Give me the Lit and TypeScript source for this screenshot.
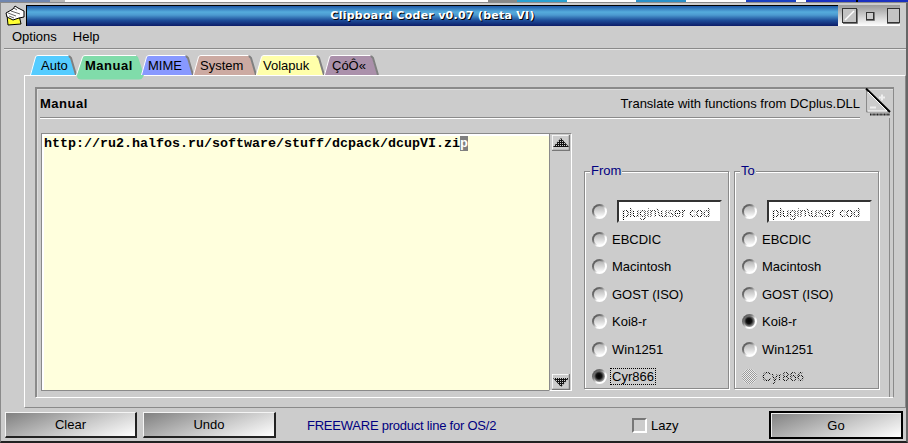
import { LitElement, html, css } from "lit";
import { customElement } from "lit/decorators.js";

const TABS = [
  { label: "Auto", w: 49, pad: 11, color: "#55ccff" },
  { label: "Manual", w: 68, pad: 9, color: "#80dcaa", active: true },
  { label: "MIME", w: 55, pad: 7, color: "#8899ff" },
  { label: "System", w: 66, pad: 7, color: "#ccaaa2" },
  { label: "Volapuk", w: 71, pad: 7, color: "#ffffaa" },
  { label: "ÇóÔ«", w: 57, pad: 8, color: "#aa90aa" },
];

const STRIP = [
  ["#6f86b0", 50], ["#b8b8b8", 15], ["#ffffff", 423], ["#888888", 29], ["#2aa0d0", 50], ["#ffffff", 69],
  ["#2a8fc8", 50], ["#ffffff", 60], ["#1a40c0", 50], ["#ffffff", 10], ["#1a30c0", 50], ["#000000", 2], ["#1a30c0", 50],
];

const ENCODINGS = ["EBCDIC", "Macintosh", "GOST (ISO)", "Koi8-r", "Win1251", "Cyr866"];

@customElement("app-root")
export class AppRoot extends LitElement {
  static styles = css`
    :host { display: block; width: 908px; height: 443px; overflow: hidden; background: #ccc;
      font-family: "Liberation Sans", Arial, sans-serif; font-size: 13px; color: #000; }
    * { box-sizing: border-box; }
    .strip { display: flex; height: 2px; overflow: hidden; }
    .strip span { flex: none; height: 2px; }
    .window { height: 441px; display: flex; flex-direction: column; background: #ccc;
      border-top: 1px solid #8a8a8a; border-left: 1px solid #8a8a8a; border-right: 2px solid #666; border-bottom: 2px solid #222; }
    .titlebar { display: flex; height: 21px; margin-top: 2px; padding-left: 4px; padding-right: 6px; }
    .app-icon { width: 21px; height: 21px; flex: none; }
    .caption { flex: 1; display: flex; align-items: center; justify-content: center; padding-bottom: 2px;
      border-top: 1px solid #000; border-left: 1px solid #000;
      background: linear-gradient(#1f5aa8 0%, #55acdc 30%, #4c9ad0 45%, #1d4c98 72%, #0c1c68 100%);
      color: #fff; text-shadow: 1px 1px 0 #000; font-family: "DejaVu Sans", sans-serif; font-weight: bold; font-size: 11px; letter-spacing: 0.26px; }
    .winbtns { width: 62px; flex: none; display: block; }
    .menu { display: flex; align-items: center; height: 23px; margin: 0 0 0 3px; padding-left: 8px; gap: 16px; padding-bottom: 2px;
      border-bottom: 1px solid #8a8a8a; box-shadow: 0 1px 0 #e8e8e8; }
    .tabs { display: flex; height: 20px; margin-top: 6px; padding-left: 29px; position: relative; z-index: 1; }
    .tab { display: grid; height: 20px; flex: none; margin-right: -3px; }
    .tab > * { grid-area: 1 / 1; }
    .tab svg { display: block; }
    .tab span { display: flex; align-items: center; padding-top: 1px; }
    .tab.active { font-weight: bold; height: 25px; letter-spacing: 0.5px; }
    .tab.active span { height: 20px; }
    .page { height: 333px; margin-left: 23px; padding: 11px 0 0 10px;
      border-top: 1px solid #fff; border-left: 1px solid #fff; border-right: 1px solid #8a8a8a; border-bottom: 1px solid #8a8a8a; }
    .frame { width: 859px; height: 311px; border-top: 1px solid #8a8a8a; border-left: 1px solid #8a8a8a;
      border-bottom: 1px solid #fff; box-shadow: inset 1px 1px 0 #8a8a8a, inset 2px 2px 0 #ddd; border-right: 1px solid #8a8a8a; }
    .header { display: flex; height: 30px; padding-left: 4px; }
    .header-text { flex: 1; display: flex; align-items: center; justify-content: space-between; padding-top: 2px;
      border-bottom: 1px solid #8a8a8a; box-shadow: 0 1px 0 #fff; }
    .header-text b { font-size: 13px; letter-spacing: 0.5px; }
    .fold { width: 28px; height: 30px; flex: none; margin-left: 5px; }
    .content { display: flex; width: 854px; height: 279px; padding: 15px 0 0 5px; border-right: 1px solid #8a8a8a; }
    .editor { width: 508px; height: 258px; flex: none; padding: 2px 0 0 2px; background: #ffffdd;
      border: 1px solid #8a8a8a; border-right: none; box-shadow: inset 1px 1px 0 #fff, inset 2px 2px 0 #fff;
      font-family: "Liberation Mono", monospace; font-size: 13.33px; font-weight: bold; line-height: 16px; white-space: pre; }
    .editor em { font-style: normal; background: #808080; color: #fff; }
    .scroll { width: 23px; height: 258px; flex: none; display: flex; flex-direction: column; justify-content: space-between;
      padding: 1px 0 0 2px; background: #ccc; border-left: 1px solid #8a8a8a; border-right: 1px solid #fff; border-bottom: 1px solid #fff; border-top: 1px solid #8a8a8a; }
    .sbtn { width: 18px; height: 16px; display: block; }
    .groups { display: flex; gap: 5px; margin-left: 12px; margin-top: 38px; }
    .group { width: 145px; height: 218px; display: flex; flex-direction: column; padding-left: 7px;
      border: 1px solid #8a8a8a; box-shadow: 1px 1px 0 #fff, inset 1px 1px 0 #fff; }
    .legend { align-self: flex-start; height: 16px; line-height: 16px; margin: -9px 0 19px -2px; padding: 0 1px; background: #ccc; color: #000080; }
    .row { display: flex; align-items: center; height: 27.5px; flex: none; gap: 5px; white-space: nowrap; }
    .row.first { gap: 10px; }
    .radio { width: 15px; height: 15px; flex: none; border-radius: 50%; display: grid; place-items: center;
      background: linear-gradient(135deg, #444 0%, #777 35%, #fff 62%, #fff 100%); }
    .radio::before { content: ""; width: 11px; height: 11px; border-radius: 50%; background: linear-gradient(#b4b4b4, #fdfdfd); }
    .radio.on::before { background: radial-gradient(circle at 45% 45%, #000 0, #111 32%, #777 58%, #ddd 85%); }
    .radio.off { background: repeating-conic-gradient(#999 0 25%, #eee 0 50%) 0 0 / 2px 2px; }
    .radio.off::before { display: none; }
    .dither { color: transparent; background: repeating-conic-gradient(#000 0 25%, transparent 0 50%) 0 0 / 2px 2px;
      -webkit-background-clip: text; background-clip: text; }
    .focus { outline: 1px dotted #000; padding: 0 1px; margin-left: -1px; }
    .field { width: 105px; height: 23px; flex: none; display: flex; align-items: center; padding: 1px 0 0 3px; background: #fff; overflow: hidden;
      border-style: solid; border-width: 2px; border-color: #333 #ccc #ccc #333; }
    .bottom { flex: 1; display: flex; align-items: center; padding-left: 4px; padding-top: 1px; }
    .btn { height: 26px; padding: 0; font: inherit; color: #000; display: block;
      background: linear-gradient(160deg, #808080 0%, #c8c8c8 55%, #ffffff 100%);
      border-style: solid; border-width: 1px 2px 2px 1px; border-color: #f4f4f4 #222 #222 #f4f4f4; }
    .clear { width: 132px; }
    .undo { width: 133px; margin-left: 6px; }
    .free { margin-left: 31px; color: #000080; width: 325px; flex: none; letter-spacing: -0.23px; }
    .check { width: 15px; height: 15px; flex: none; background: #ccc;
      border-style: solid; border-width: 2px; border-color: #777 #fff #fff #777; }
    .lazy { margin-left: 4px; width: 118px; flex: none; }
    .go { width: 134px; height: 28px; border: 2px solid #000; box-shadow: inset 1px 1px 0 #eee; }
  `;

  private tab(t: { label: string; w: number; pad: number; color: string; active?: boolean }) {
    const w = t.w;
    if (t.active) {
      return html`<div class="tab active" style="width:${w}px">
        <svg width=${w} height="25" viewBox="0 0 ${w} 25">
          <path d="M0.5 20 L6.5 2 Q7 0.5 9 0.5 L${w - 8} 0.5 L${w - 6} 2 L${w} 20 L${w - 1} 22 Q${w - 2} 24.5 ${w - 5} 24.5 L5 24.5 Q2 24.5 1 22 Z" fill=${t.color}></path>
          <path d="M0.5 20 L6.5 2 Q7 0.5 9 0.5 L${w - 8} 0.5" fill="none" stroke="#fff"></path>
        </svg>
        <span style="padding-left:${t.pad}px">${t.label}</span></div>`;
    }
    return html`<div class="tab" style="width:${w}px">
      <svg width=${w} height="20" viewBox="0 0 ${w} 20">
        <path d="M0 20 L5.5 2 Q6 0.5 8 0.5 L${w - 11} 0.5 L${w - 9} 2 L${w - 3.5} 20 Z" fill=${t.color}></path>
        <path d="M0.5 20 L5.5 2 Q6 0.5 8 0.5 L${w - 11} 0.5" fill="none" stroke="#fff"></path>
        <path d="M${w - 10} 1 L${w - 8} 3 L${w - 3} 20" fill="none" stroke="#808080" stroke-width="2"></path>
      </svg>
      <span style="padding-left:${t.pad}px">${t.label}</span></div>`;
  }

  private group(title: string, selected: string, disabled?: string) {
    return html`<div class="group">
      <div class="legend">${title}</div>
      <div class="row first"><i class="radio"></i><div class="field"><span class="dither">plugin\\user cod</span></div></div>
      ${ENCODINGS.map((e) => {
        const on = e === selected;
        const off = e === disabled;
        return html`<div class="row"><i class="radio ${on ? "on" : ""} ${off ? "off" : ""}"></i><span class="${off ? "dither" : ""} ${on && title === "From" ? "focus" : ""}">${e}</span></div>`;
      })}
    </div>`;
  }

  render() {
    return html`
      <div class="strip">${STRIP.map(([c, w]) => html`<span style="background:${c};width:${w}px"></span>`)}</div>
      <div class="window">
        <div class="titlebar">
          <svg class="app-icon" viewBox="0 0 21 21">
            <path d="M2 10 L14 10 L16 19 L3 20 Z" fill="#ffff33" stroke="#000"></path>
            <path d="M1 8 L8 4 L10 1 L13 3 L19 6 L19 12 L14 13 L8 15 L2 12 Z" fill="#fff" stroke="#000"></path>
            <path d="M3 8 L11 11 M6 6 L15 9 M9 3 L12 5 M4 11 L9 13" stroke="#666" fill="none"></path>
          </svg>
          <div class="caption">Clipboard Coder v0.07 (beta VI)</div>
          <svg class="winbtns" width="62" height="21" viewBox="0 0 62 21">
            <defs><linearGradient id="wb" x1="0" y1="0" x2="0" y2="1"><stop offset="0" stop-color="#999"></stop><stop offset="0.5" stop-color="#ccc"></stop><stop offset="1" stop-color="#fff"></stop></linearGradient></defs>
            <rect width="62" height="21" fill="url(#wb)"></rect>
            <rect x="4.5" y="3.5" width="14" height="14" fill="#c4c4c4" stroke="#333"></rect>
            <path d="M5 18.5 H19.5 V4" fill="none" stroke="#777"></path>
            <path d="M7 15 L16 6" stroke="#fff" stroke-width="1.5"></path>
            <rect x="28.5" y="7.5" width="7" height="7" fill="#ccc" stroke="#333"></rect>
            <path d="M28 15.5 H36.5 V7" fill="none" stroke="#777"></path>
            <rect x="49.5" y="3.5" width="12" height="14" fill="#c4c4c4" stroke="#333"></rect>
            <path d="M49 18.5 H61.5" fill="none" stroke="#777"></path>
          </svg>
        </div>
        <div class="menu"><span>Options</span><span>Help</span></div>
        <div class="tabs">${TABS.map((t) => this.tab(t))}</div>
        <div class="page">
          <div class="frame">
            <div class="header">
              <div class="header-text"><b>Manual</b><span>Translate with functions from DCplus.DLL</span></div>
              <svg class="fold" viewBox="0 0 28 30">
                <path d="M1.5 1 L25 24 L1.5 24 Z" fill="#ccc" stroke="#8a8a8a"></path>
                <path d="M1 0.5 L25 24" stroke="#000" stroke-width="2"></path>
                <path d="M3 4 L22 23 H3" fill="none" stroke="#fff"></path>
                <path d="M5 26.5 H25" stroke="#222" stroke-width="2" stroke-dasharray="1 0.4"></path>
                <path d="M14 9.5 H20 M17 6.5 V12.5" stroke="#eee" stroke-width="2"></path>
                <path d="M5 19.5 H11" stroke="#eee" stroke-width="2"></path>
              </svg>
            </div>
            <div class="content">
              <div class="editor">http://ru2.halfos.ru/software/stuff/dcpack/dcupVI.zi<em>p</em></div>
              <div class="scroll">
                <svg class="sbtn" viewBox="0 0 18 16">
                  <defs><pattern id="dith" width="2" height="2" patternUnits="userSpaceOnUse"><rect width="2" height="2" fill="#111"></rect><rect width="1" height="1" fill="#ccc"></rect></pattern></defs>
                  <rect width="18" height="16" fill="#ccc"></rect>
                  <path d="M0 16 V0 H18" fill="none" stroke="#fff" stroke-width="1.5"></path>
                  <path d="M0 15.5 H17.5 V0" fill="none" stroke="#777" stroke-width="1.5"></path>
                  <path d="M9 3 L17 12 H1 Z" fill="url(#dith)"></path>
                </svg>
                <svg class="sbtn" viewBox="0 0 18 16">
                  <rect width="18" height="16" fill="#ccc"></rect>
                  <path d="M0 16 V0 H18" fill="none" stroke="#fff" stroke-width="1.5"></path>
                  <path d="M0 15.5 H17.5 V0" fill="none" stroke="#777" stroke-width="1.5"></path>
                  <path d="M9 13 L17 4 H1 Z" fill="url(#dith)"></path>
                </svg>
              </div>
              <div class="groups">
                ${this.group("From", "Cyr866")}
                ${this.group("To", "Koi8-r", "Cyr866")}
              </div>
            </div>
          </div>
        </div>
        <div class="bottom">
          <button class="btn clear">Clear</button>
          <button class="btn undo">Undo</button>
          <span class="free">FREEWARE product line for OS/2</span>
          <i class="check"></i>
          <span class="lazy">Lazy</span>
          <button class="btn go">Go</button>
        </div>
      </div>
    `;
  }
}
